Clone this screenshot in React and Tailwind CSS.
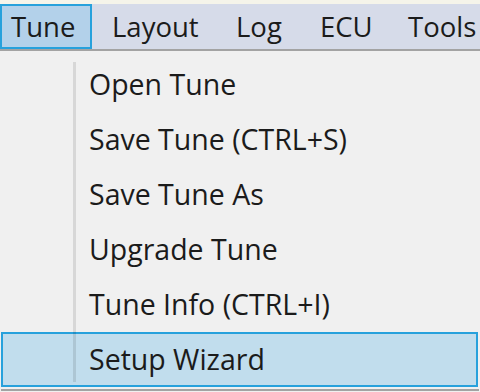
import React from 'react';

const menus = [
  { label: 'Tune', cls: 'w-[92px] pl-[9px] border-2 border-[#27a1dc] bg-[#b3d1ea]' },
  { label: 'Layout', cls: 'w-[124px] pl-[20px]' },
  { label: 'Log', cls: 'w-[84px] pl-[20px]' },
  { label: 'ECU', cls: 'w-[88px] pl-[20px]' },
  { label: 'Tools', cls: 'pl-[20px]' },
];
const items = ['Open Tune', 'Save Tune (CTRL+S)', 'Save Tune As', 'Upgrade Tune', 'Tune Info (CTRL+I)', 'Setup Wizard'];

export default function App() {
  return (
    <div
      className="w-[480px] h-[392px] overflow-hidden bg-[#f0f0f0] text-[#1b1b1b]"
      style={{ fontFamily: '"Open Sans", "Noto Sans", sans-serif' }}
    >
      <div className="h-[4px] bg-[#f5f4ea]" />
      <div className="flex h-[47px] bg-[#d6dbe9] border-b-2 border-[#a3a3a3] whitespace-nowrap text-[27.5px] leading-none">
        {menus.map((m) => (
          <div key={m.label} className={'flex items-center shrink-0 ' + m.cls}>
            {m.label}
          </div>
        ))}
      </div>
      <div className="relative pt-[6px] px-[1px] text-[28.5px] leading-none">
        {items.map((t, i) => (
          <div
            key={t}
            className={
              i === items.length - 1
                ? 'flex items-center h-[55px] w-[477px] pl-[86px] border-2 border-[#27a1dc] bg-[#c1dded]'
                : 'flex items-center h-[55px] pl-[88px]'
            }
          >
            {t}
          </div>
        ))}
        <div className="absolute left-[73px] top-[11px] w-[3px] h-[320px] bg-black/10" />
        <div className="h-[2px]" />
        <div className="h-[2px] bg-[#a3a3a3]" />
      </div>
    </div>
  );
}
